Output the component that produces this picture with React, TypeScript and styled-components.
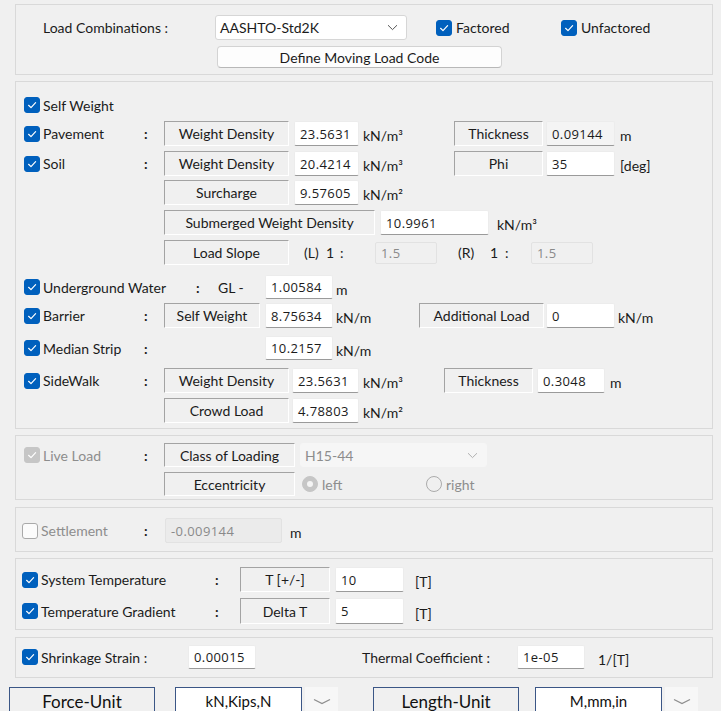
import React from 'react';
import styled, { createGlobalStyle } from 'styled-components';

const GlobalStyle = createGlobalStyle`
  html, body {
    margin: 0;
    padding: 0;
    background: #f0f0f0;
    overflow: hidden;
  }
  body {
    font-family: Lato, "Liberation Sans", sans-serif;
    font-size: 14px;
    color: #1b1b1b;
  }
  * { box-sizing: border-box; }
`;

const Page = styled.div`
  width: 721px;
  padding: 4px 8px 0 9px;
  display: flex;
  flex-direction: column;
`;

const Panel = styled.div<{ $mt: number; $pt: number; $pb: number; $pl?: number }>`
  margin: ${(p) => p.$mt}px 0 0 6px;
  border: 1px solid #d9d9d9;
  padding: ${(p) => p.$pt}px 0 ${(p) => p.$pb}px ${(p) => p.$pl ?? 8}px;
  display: flex;
  flex-direction: column;
`;

const Row = styled.div<{ $h: number; $mt?: number }>`
  display: flex;
  align-items: center;
  height: ${(p) => p.$h}px;
  margin-top: ${(p) => p.$mt ?? 0}px;
`;

const Name = styled.div<{ $w: number; $dim?: boolean }>`
  display: flex;
  align-items: center;
  gap: 3px;
  width: ${(p) => p.$w}px;
  flex-shrink: 0;
  white-space: nowrap;
  color: ${(p) => (p.$dim ? '#8d8d8d' : '#1b1b1b')};
`;

const Box = styled.span<{ $state: 'on' | 'off' | 'dim' }>`
  width: 16px;
  height: 16px;
  border-radius: 3px;
  flex-shrink: 0;
  display: inline-flex;
  align-items: center;
  justify-content: center;
  background: ${(p) => (p.$state === 'on' ? '#0060bd' : p.$state === 'dim' ? '#c6c6c6' : '#fbfbfb')};
  border: 1px solid ${(p) => (p.$state === 'on' ? '#0060bd' : p.$state === 'dim' ? '#c6c6c6' : '#a9a9a9')};
`;

const Check = ({ state }: { state: 'on' | 'off' | 'dim' }) => (
  <Box $state={state}>
    {state !== 'off' && (
      <svg width="12" height="12" viewBox="0 0 12 12">
        <path d="M2.6 6.3 L5 8.6 L9.6 3.6" fill="none" stroke="#fff" strokeWidth="1.2" strokeLinecap="round" strokeLinejoin="round" />
      </svg>
    )}
  </Box>
);

const Colon = styled.div<{ $w: number; $pl?: number }>`
  width: ${(p) => p.$w}px;
  padding-left: ${(p) => p.$pl ?? 4}px;
  flex-shrink: 0;
  font-weight: 700;
`;

const Spacer = styled.div<{ $w: number }>`
  width: ${(p) => p.$w}px;
  flex-shrink: 0;
`;

const Caption = styled.div<{ $w: number }>`
  width: ${(p) => p.$w}px;
  height: 100%;
  flex-shrink: 0;
  display: flex;
  align-items: center;
  justify-content: center;
  border-top: 1px solid #a3a3a3;
  border-left: 1px solid #a3a3a3;
  border-right: 1px solid #ffffff;
  border-bottom: 1px solid #ffffff;
  white-space: nowrap;
`;

const Field = styled.div<{ $w: number; $ml?: number; $h?: number; $kind?: 'edit' | 'ro' | 'off' | 'dark' }>`
  width: ${(p) => p.$w}px;
  height: ${(p) => (p.$h ? `${p.$h}px` : '100%')};
  margin-left: ${(p) => p.$ml ?? 0}px;
  flex-shrink: 0;
  display: flex;
  align-items: center;
  padding-left: 5px;
  font-family: "Open Sans", "Noto Sans", sans-serif;
  font-size: 13px;
  letter-spacing: 0.4px;
  background: ${(p) =>
    p.$kind === 'ro' ? '#f4f4f4' : p.$kind === 'off' ? '#f0f0f0' : p.$kind === 'dark' ? '#ebebeb' : '#ffffff'};
  color: ${(p) => (p.$kind === 'off' || p.$kind === 'dark' ? '#8a8a8a' : '#1b1b1b')};
  border: 1px solid ${(p) => (p.$kind === 'off' || p.$kind === 'dark' ? '#e2e2e2' : '#ececec')};
  border-bottom-color: ${(p) => (p.$kind === 'off' || p.$kind === 'dark' ? '#e2e2e2' : '#9a9a9a')};
  border-radius: 2px;
`;

const Unit = styled.div<{ $ml: number; $w?: number }>`
  margin-left: ${(p) => p.$ml}px;
  width: ${(p) => (p.$w ? `${p.$w}px` : 'auto')};
  flex-shrink: 0;
  padding-top: 4px;
  white-space: nowrap;
`;

const Text = styled.div<{ $w?: number; $ml?: number; $dim?: boolean }>`
  width: ${(p) => (p.$w ? `${p.$w}px` : 'auto')};
  margin-left: ${(p) => p.$ml ?? 0}px;
  flex-shrink: 0;
  white-space: nowrap;
  color: ${(p) => (p.$dim ? '#8d8d8d' : '#1b1b1b')};
`;

const Combo = styled.div<{ $w: number; $ml?: number; $dim?: boolean }>`
  width: ${(p) => p.$w}px;
  height: 100%;
  margin-left: ${(p) => p.$ml ?? 0}px;
  flex-shrink: 0;
  display: flex;
  align-items: center;
  justify-content: space-between;
  padding: 0 8px 0 4px;
  background: ${(p) => (p.$dim ? '#f6f6f6' : '#ffffff')};
  color: ${(p) => (p.$dim ? '#8d8d8d' : '#1b1b1b')};
  border: 1px solid ${(p) => (p.$dim ? '#f6f6f6' : '#d6d6d6')};
  border-radius: 3px;
`;

const Chevron = ({ color }: { color: string }) => (
  <svg width="11" height="7" viewBox="0 0 11 7">
    <path d="M1 1.2 L5.5 5.6 L10 1.2" fill="none" stroke={color} strokeWidth="1" />
  </svg>
);

const Button = styled.div`
  width: 285px;
  height: 22px;
  margin-left: 174px;
  display: flex;
  align-items: center;
  justify-content: center;
  background: #fdfdfd;
  border: 1px solid #d3d3d3;
  border-bottom-color: #b8b8b8;
  border-radius: 4px;
`;

const Toggle = styled.div<{ $w: number; $ml?: number }>`
  display: flex;
  align-items: center;
  gap: 4px;
  width: ${(p) => p.$w}px;
  margin-left: ${(p) => p.$ml ?? 0}px;
  flex-shrink: 0;
`;

const Radio = styled.span<{ $on?: boolean }>`
  width: 16px;
  height: 16px;
  border-radius: 50%;
  flex-shrink: 0;
  display: inline-flex;
  align-items: center;
  justify-content: center;
  background: ${(p) => (p.$on ? '#c6c6c6' : 'transparent')};
  border: 1px solid ${(p) => (p.$on ? '#c6c6c6' : '#ababab')};
  &::after {
    content: "";
    display: ${(p) => (p.$on ? 'block' : 'none')};
    width: 6px;
    height: 6px;
    border-radius: 50%;
    background: #f4f4f4;
  }
`;

const UnitBar = styled.div`
  display: flex;
  align-items: center;
  height: 28px;
  margin-top: 9px;
`;

const UnitTitle = styled.div<{ $ml?: number }>`
  width: 146px;
  height: 100%;
  margin-left: ${(p) => p.$ml ?? 0}px;
  display: flex;
  align-items: center;
  justify-content: center;
  border: 1px solid #3b5686;
  font-size: 17px;
  color: #111;
`;

const UnitValue = styled.div<{ $ml: number }>`
  width: 127px;
  height: 100%;
  margin-left: ${(p) => p.$ml}px;
  display: flex;
  align-items: center;
  justify-content: center;
  background: #ffffff;
  border: 1px solid #3b5686;
  font-size: 15px;
  color: #111;
`;

const UnitDrop = styled.div`
  width: 33px;
  height: 100%;
  margin-left: 3px;
  display: flex;
  align-items: center;
  justify-content: center;
  background: #f7f7f7;
`;

const WideChevron = () => (
  <svg width="18" height="7" viewBox="0 0 18 7">
    <path d="M1 1.5 L9 5.5 L17 1.5" fill="none" stroke="#8e8e8e" strokeWidth="1.3" />
  </svg>
);

export default function App() {
  return (
    <>
      <GlobalStyle />
      <Page>
        <Panel $mt={0} $pt={10} $pb={6} $pl={27}>
          <Row $h={25}>
            <Text $w={172}>Load Combinations :</Text>
            <Combo $w={192}>
              <span>AASHTO-Std2K</span>
              <Chevron color="#555" />
            </Combo>
            <Toggle $w={125} $ml={29}>
              <Check state="on" />
              <span>Factored</span>
            </Toggle>
            <Toggle $w={120}>
              <Check state="on" />
              <span>Unfactored</span>
            </Toggle>
          </Row>
          <Row $h={22} $mt={6}>
            <Button>Define Moving Load Code</Button>
          </Row>
        </Panel>

        <Panel $mt={6} $pt={11} $pb={5}>
          <Row $h={24}>
            <Name $w={116}>
              <Check state="on" />
              Self Weight
            </Name>
          </Row>
          <Row $h={25} $mt={4}>
            <Name $w={116}>
              <Check state="on" />
              Pavement
            </Name>
            <Colon $w={24}>:</Colon>
            <Caption $w={125}>Weight Density</Caption>
            <Field $w={65} $ml={5}>23.5631</Field>
            <Unit $ml={4} $w={91}>kN/m³</Unit>
            <Caption $w={89}>Thickness</Caption>
            <Field $w={69} $ml={3} $kind="ro">0.09144</Field>
            <Unit $ml={5}>m</Unit>
          </Row>
          <Row $h={25} $mt={5}>
            <Name $w={116}>
              <Check state="on" />
              Soil
            </Name>
            <Colon $w={24}>:</Colon>
            <Caption $w={125}>Weight Density</Caption>
            <Field $w={65} $ml={5}>20.4214</Field>
            <Unit $ml={4} $w={91}>kN/m³</Unit>
            <Caption $w={89}>Phi</Caption>
            <Field $w={69} $ml={3}>35</Field>
            <Unit $ml={5}>[deg]</Unit>
          </Row>
          <Row $h={25} $mt={4}>
            <Spacer $w={140} />
            <Caption $w={125}>Surcharge</Caption>
            <Field $w={65} $ml={5}>9.57605</Field>
            <Unit $ml={4}>kN/m²</Unit>
          </Row>
          <Row $h={25} $mt={5}>
            <Spacer $w={140} />
            <Caption $w={211}>Submerged Weight Density</Caption>
            <Field $w={109} $ml={5}>10.9961</Field>
            <Unit $ml={8}>kN/m³</Unit>
          </Row>
          <Row $h={25} $mt={5}>
            <Spacer $w={140} />
            <Caption $w={125}>Load Slope</Caption>
            <Text $w={22} $ml={15}>(L)</Text>
            <Text $w={14}>1</Text>
            <Text $w={35}>:</Text>
            <Field $w={62} $h={22} $kind="off">1.5</Field>
            <Text $w={32} $ml={21}>(R)</Text>
            <Text $w={15}>1</Text>
            <Text $w={26}>:</Text>
            <Field $w={62} $h={22} $kind="off">1.5</Field>
          </Row>
          <Row $h={24} $mt={10}>
            <Name $w={168}>
              <Check state="on" />
              Underground Water
            </Name>
            <Colon $w={26}>:</Colon>
            <Text $w={47}>GL -</Text>
            <Field $w={68}>1.00584</Field>
            <Unit $ml={3}>m</Unit>
          </Row>
          <Row $h={25} $mt={4}>
            <Name $w={116}>
              <Check state="on" />
              Barrier
            </Name>
            <Colon $w={24}>:</Colon>
            <Caption $w={96}>Self Weight</Caption>
            <Field $w={68} $ml={5}>8.75634</Field>
            <Unit $ml={3} $w={83}>kN/m</Unit>
            <Caption $w={125}>Additional Load</Caption>
            <Field $w={69} $ml={2}>0</Field>
            <Unit $ml={3}>kN/m</Unit>
          </Row>
          <Row $h={24} $mt={8}>
            <Name $w={116}>
              <Check state="on" />
              Median Strip
            </Name>
            <Colon $w={125}>:</Colon>
            <Field $w={68}>10.2157</Field>
            <Unit $ml={3}>kN/m</Unit>
          </Row>
          <Row $h={25} $mt={8}>
            <Name $w={116}>
              <Check state="on" />
              SideWalk
            </Name>
            <Colon $w={24}>:</Colon>
            <Caption $w={125}>Weight Density</Caption>
            <Field $w={67} $ml={3}>23.5631</Field>
            <Unit $ml={4} $w={81}>kN/m³</Unit>
            <Caption $w={89}>Thickness</Caption>
            <Field $w={68} $ml={4}>0.3048</Field>
            <Unit $ml={5}>m</Unit>
          </Row>
          <Row $h={25} $mt={5}>
            <Spacer $w={140} />
            <Caption $w={125}>Crowd Load</Caption>
            <Field $w={67} $ml={3}>4.78803</Field>
            <Unit $ml={4}>kN/m²</Unit>
          </Row>
        </Panel>

        <Panel $mt={6} $pt={7} $pb={3}>
          <Row $h={24}>
            <Name $w={116} $dim>
              <Check state="dim" />
              Live Load
            </Name>
            <Colon $w={24}>:</Colon>
            <Caption $w={131}>Class of Loading</Caption>
            <Combo $w={187} $ml={5} $dim>
              <span>H15-44</span>
              <Chevron color="#b0b0b0" />
            </Combo>
          </Row>
          <Row $h={24} $mt={5}>
            <Spacer $w={140} />
            <Caption $w={131}>Eccentricity</Caption>
            <Toggle $w={124} $ml={7}>
              <Radio $on />
              <Text $dim>left</Text>
            </Toggle>
            <Toggle $w={80}>
              <Radio />
              <Text $dim>right</Text>
            </Toggle>
          </Row>
        </Panel>

        <Panel $mt={7} $pt={10} $pb={8} $pl={6}>
          <Row $h={25}>
            <Name $w={118} $dim>
              <Check state="off" />
              Settlement
            </Name>
            <Colon $w={25}>:</Colon>
            <Field $w={117} $kind="dark">-0.009144</Field>
            <Unit $ml={8}>m</Unit>
          </Row>
        </Panel>

        <Panel $mt={6} $pt={8} $pb={5} $pl={6}>
          <Row $h={25}>
            <Name $w={188}>
              <Check state="on" />
              System Temperature
            </Name>
            <Colon $w={30} $pl={5}>:</Colon>
            <Caption $w={90}>T [+/-]</Caption>
            <Field $w={69} $ml={5}>10</Field>
            <Unit $ml={11}>[T]</Unit>
          </Row>
          <Row $h={26} $mt={6}>
            <Name $w={188}>
              <Check state="on" />
              Temperature Gradient
            </Name>
            <Colon $w={30} $pl={5}>:</Colon>
            <Caption $w={90}>Delta T</Caption>
            <Field $w={69} $ml={5}>5</Field>
            <Unit $ml={11}>[T]</Unit>
          </Row>
        </Panel>

        <Panel $mt={7} $pt={7} $pb={8} $pl={6}>
          <Row $h={24}>
            <Name $w={166}>
              <Check state="on" />
              Shrinkage Strain :
            </Name>
            <Field $w={68}>0.00015</Field>
            <Text $w={155} $ml={106}>Thermal Coefficient :</Text>
            <Field $w={68}>1e-05</Field>
            <Unit $ml={13}>1/[T]</Unit>
          </Row>
        </Panel>

        <UnitBar>
          <UnitTitle>Force-Unit</UnitTitle>
          <UnitValue $ml={20}>kN,Kips,N</UnitValue>
          <UnitDrop>
            <WideChevron />
          </UnitDrop>
          <UnitTitle $ml={35}>Length-Unit</UnitTitle>
          <UnitValue $ml={16}>M,mm,in</UnitValue>
          <UnitDrop>
            <WideChevron />
          </UnitDrop>
        </UnitBar>
      </Page>
    </>
  );
}
